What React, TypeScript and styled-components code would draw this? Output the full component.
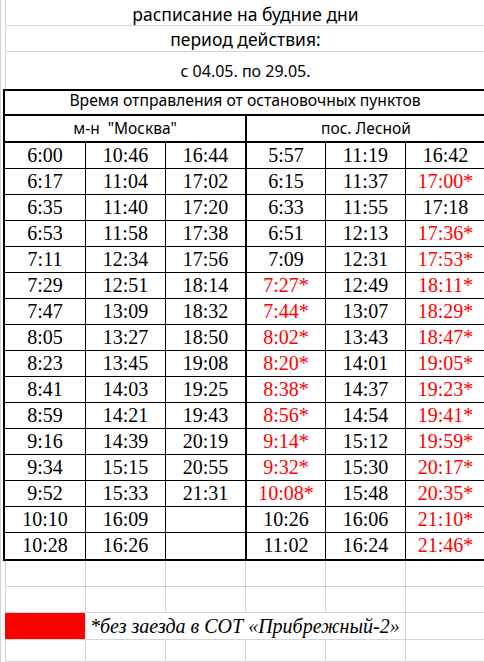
import React from 'react';
import styled, { createGlobalStyle } from 'styled-components';

const GRID = '#d4d4d4';
const RED = '#ff0000';

const GlobalStyle = createGlobalStyle`
  html, body {
    margin: 0;
    padding: 0;
    background: #fff;
  }
  body {
    overflow: hidden;
  }
`;

const Page = styled.div`
  width: 484px;
  height: 662px;
  box-sizing: border-box;
  overflow: hidden;
  border-left: 1px solid ${GRID};
  padding-left: 4px;
  display: flex;
  flex-direction: column;
  background: #fff;
  color: #000;
`;

interface TitleProps {
  $h: number;
  $size: number;
  $pb: number;
  $line?: boolean;
}

// merged title cells above the table
const TitleCell = styled.div<TitleProps>`
  flex: 0 0 auto;
  width: 480px;
  height: ${p => p.$h}px;
  box-sizing: border-box;
  border-left: 1px solid ${GRID};
  border-bottom: ${p => (p.$line ? `1px solid ${GRID}` : 'none')};
  display: flex;
  align-items: flex-end;
  justify-content: center;
  padding-bottom: ${p => p.$pb}px;
  font-family: "Noto Sans", "Open Sans", sans-serif;
  font-size: ${p => p.$size}px;
  line-height: 1;
`;

const Table = styled.div`
  flex: 0 0 auto;
  width: 484px;
  box-sizing: border-box;
  margin-left: -2px;
  border: 2px solid #000;
  display: grid;
  grid-template-columns: repeat(6, 80px);
  font-family: "Liberation Serif", serif;
`;

const Caption = styled.div`
  grid-column: 1 / -1;
  height: 25px;
  box-sizing: border-box;
  border-bottom: 2px solid #000;
  display: flex;
  align-items: flex-end;
  justify-content: center;
  padding-bottom: 5px;
  font-family: "Noto Sans", "Open Sans", sans-serif;
  font-size: 15.7px;
  line-height: 1;
`;

const Stop = styled.div<{ $divider?: boolean }>`
  grid-column: span 3;
  height: 27px;
  box-sizing: border-box;
  border-bottom: 2px solid #000;
  border-left: ${p => (p.$divider ? '2px solid #000' : 'none')};
  display: flex;
  align-items: flex-end;
  justify-content: center;
  padding-bottom: 5px;
  font-family: "Noto Sans", "Open Sans", sans-serif;
  font-size: 15.5px;
  line-height: 1;
  white-space: pre;
`;

interface TimeProps {
  $edge: number;
  $last: boolean;
  $red: boolean;
}

const Time = styled.div<TimeProps>`
  height: 26px;
  box-sizing: border-box;
  border-left: ${p => (p.$edge ? `${p.$edge}px solid #000` : 'none')};
  border-bottom: ${p => (p.$last ? 'none' : '1px solid #000')};
  text-align: center;
  font-family: "Liberation Serif", serif;
  font-size: 20px;
  line-height: 25px;
  color: ${p => (p.$red ? RED : '#000')};
`;

const SheetRow = styled.div<{ $h?: number }>`
  flex: ${p => (p.$h ? '0 0 auto' : '1 1 auto')};
  height: ${p => (p.$h ? `${p.$h}px` : 'auto')};
  width: 480px;
  display: grid;
  grid-template-columns: repeat(6, 80px);
`;

const GridCell = styled.div`
  box-sizing: border-box;
  border-left: 1px solid ${GRID};
  border-bottom: 1px solid ${GRID};
`;

const Swatch = styled.div`
  background: ${RED};
  border-bottom: 1px solid ${GRID};
`;

const Note = styled.div`
  grid-column: span 4;
  box-sizing: border-box;
  border-bottom: 1px solid ${GRID};
  padding-left: 5px;
  font-family: "Liberation Serif", serif;
  font-style: italic;
  font-size: 20px;
  line-height: 26px;
  white-space: nowrap;
`;

const moscow = [
  ['6:00', '6:17', '6:35', '6:53', '7:11', '7:29', '7:47', '8:05', '8:23', '8:41', '8:59', '9:16', '9:34', '9:52', '10:10', '10:28'],
  ['10:46', '11:04', '11:40', '11:58', '12:34', '12:51', '13:09', '13:27', '13:45', '14:03', '14:21', '14:39', '15:15', '15:33', '16:09', '16:26'],
  ['16:44', '17:02', '17:20', '17:38', '17:56', '18:14', '18:32', '18:50', '19:08', '19:25', '19:43', '20:19', '20:55', '21:31', '', ''],
];

// "*" marks trips without the detour, shown in red
const lesnoy = [
  ['5:57', '6:15', '6:33', '6:51', '7:09', '7:27*', '7:44*', '8:02*', '8:20*', '8:38*', '8:56*', '9:14*', '9:32*', '10:08*', '10:26', '11:02'],
  ['11:19', '11:37', '11:55', '12:13', '12:31', '12:49', '13:07', '13:43', '14:01', '14:37', '14:54', '15:12', '15:30', '15:48', '16:06', '16:24'],
  ['16:42', '17:00*', '17:18', '17:36*', '17:53*', '18:11*', '18:29*', '18:47*', '19:05*', '19:23*', '19:41*', '19:59*', '20:17*', '20:35*', '21:10*', '21:46*'],
];

const columns = [...moscow, ...lesnoy];
const rowCount = 16;

function BlankRow({ h }: { h?: number }) {
  return (
    <SheetRow $h={h}>
      {Array.from({ length: 6 }, (_, i) => (
        <GridCell key={i} />
      ))}
    </SheetRow>
  );
}

export default function App() {
  return (
    <>
      <GlobalStyle />
      <Page>
        <TitleCell $h={26} $size={17.5} $pb={1.5} $line>
          расписание на будние дни
        </TitleCell>
        <TitleCell $h={26} $size={17.5} $pb={2.3} $line>
          период действия:
        </TitleCell>
        <TitleCell $h={37} $size={16} $pb={10.5}>
          с 04.05. по 29.05.
        </TitleCell>

        <Table>
          <Caption>Время отправления от остановочных пунктов</Caption>
          <Stop>{'м-н  "Москва"'}</Stop>
          <Stop $divider>пос. Лесной</Stop>
          {Array.from({ length: rowCount }, (_, r) =>
            columns.map((col, c) => (
              <Time
                key={`${r}-${c}`}
                $edge={c === 0 ? 0 : c === 3 ? 2 : 1}
                $last={r === rowCount - 1}
                $red={col[r].endsWith('*')}
              >
                {col[r]}
              </Time>
            ))
          )}
        </Table>

        <BlankRow h={26} />
        <BlankRow h={26} />
        <SheetRow $h={26}>
          <Swatch />
          <Note>*без заезда в СОТ «Прибрежный-2»</Note>
          <GridCell />
        </SheetRow>
        <BlankRow />
      </Page>
    </>
  );
}
